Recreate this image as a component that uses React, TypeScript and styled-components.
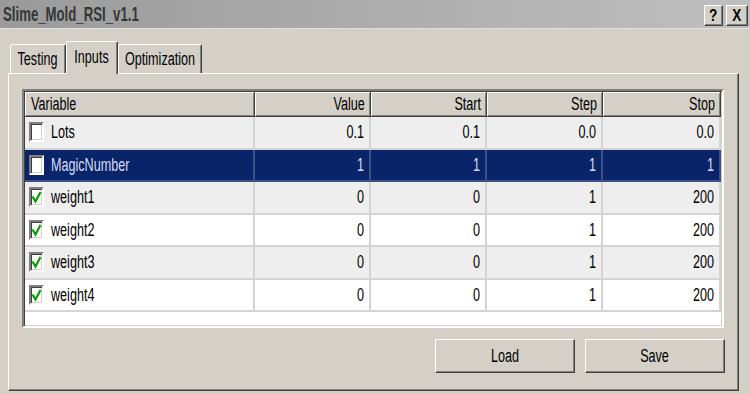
import React from "react";
import styled, { createGlobalStyle } from "styled-components";

const GlobalStyle = createGlobalStyle`
  html, body {
    margin: 0;
    padding: 0;
    background: #d4d0c8;
  }
  body {
    font-family: "Liberation Sans", Arial, sans-serif;
  }
`;

// narrow bitmap-ish UI font: regular face squeezed horizontally
const Label = styled.span<{
  $size?: number;
  $scale?: number;
  $origin?: string;
  $bold?: boolean;
  $color?: string;
}>`
  display: inline-block;
  font-size: ${(p) => p.$size ?? 18}px;
  font-weight: ${(p) => (p.$bold ? 700 : 400)};
  color: ${(p) => p.$color ?? "inherit"};
  transform: scaleX(${(p) => p.$scale ?? 0.7});
  transform-origin: ${(p) => p.$origin ?? "left"} center;
  white-space: nowrap;
  line-height: 1;
`;

const Window = styled.div`
  width: 750px;
  height: 394px;
  background: #d4d0c8;
  display: flex;
  flex-direction: column;
  overflow: hidden;
  color: #000;
`;

const TitleBar = styled.div`
  height: 29px;
  flex: none;
  box-sizing: border-box;
  display: flex;
  align-items: center;
  justify-content: space-between;
  padding: 0 2px 0 3px;
  background: linear-gradient(to right, #9a9a9a, #bfbfbf);
  border-bottom: 1px solid #e2e0da;
`;

const CapButtons = styled.div`
  display: flex;
  gap: 3px;
  margin-top: 2px;
`;

const CapButton = styled.div<{ $w: number }>`
  width: ${(p) => p.$w}px;
  height: 21px;
  box-sizing: border-box;
  background: #d4d0c8;
  border: 1px solid;
  border-color: #fff #404040 #404040 #fff;
  box-shadow: inset -1px -1px #808080;
  display: flex;
  align-items: center;
  justify-content: center;
`;

const Body = styled.div`
  flex: 1;
  display: flex;
  flex-direction: column;
  padding: 12px 11px 3px 8px;
  min-height: 0;
`;

const TabStrip = styled.div`
  height: 32px;
  flex: none;
  display: flex;
  align-items: flex-end;
  padding-left: 2px;
  position: relative;
  z-index: 1;
`;

const Tab = styled.div<{ $w: number; $active?: boolean }>`
  width: ${(p) => p.$w}px;
  height: ${(p) => (p.$active ? 33 : 29)}px;
  margin-bottom: ${(p) => (p.$active ? -1 : 0)}px;
  box-sizing: border-box;
  background: #d4d0c8;
  border: 1px solid;
  border-bottom: none;
  border-color: #fff #404040 transparent #fff;
  border-radius: 2px 2px 0 0;
  box-shadow: inset -1px 0 #808080;
  display: flex;
  align-items: center;
  justify-content: center;
  padding-bottom: ${(p) => (p.$active ? 3 : 0)}px;
`;

const Panel = styled.div`
  flex: 1;
  box-sizing: border-box;
  display: flex;
  flex-direction: column;
  gap: 11px;
  padding: 15px 14px 16px 13px;
  border: 1px solid;
  border-color: #fff #404040 #404040 #fff;
  box-shadow: inset -1px -1px #808080;
`;

const Table = styled.div`
  height: 239px;
  flex: none;
  box-sizing: border-box;
  background: #fff;
  border: 2px solid;
  border-color: #808080 #fff #fff #808080;
  box-shadow: inset 1px 1px #404040, inset -1px -1px #d4d0c8;
  padding: 1px;
  overflow: hidden;
`;

const Row = styled.div<{ $bg: string }>`
  display: grid;
  grid-template-columns: 230px 116px 116px 116px 1fr;
  background: ${(p) => p.$bg};
`;

const HeadCell = styled.div<{ $align: string }>`
  height: 25px;
  box-sizing: border-box;
  display: flex;
  align-items: center;
  justify-content: ${(p) => (p.$align === "left" ? "flex-start" : "flex-end")};
  padding: 0 5px 0 6px;
  background: #d4d0c8;
  border-right: 1px solid #404040;
  border-bottom: 1px solid #404040;
  box-shadow: inset 1px 1px #fff, inset -1px -1px #808080;
`;

const Cell = styled.div<{ $align: string; $line: string }>`
  height: 32.5px;
  box-sizing: border-box;
  display: flex;
  align-items: center;
  justify-content: ${(p) => (p.$align === "left" ? "flex-start" : "flex-end")};
  gap: 7px;
  padding: 0 5px 0 4px;
  border-right: 2px solid ${(p) => p.$line};
  border-bottom: 2px solid ${(p) => p.$line};
`;

const CheckBox = styled.div`
  width: 15px;
  height: 20px;
  flex: none;
  box-sizing: border-box;
  background: #fff;
  border: 2px solid;
  border-color: #808080 #fff #fff #808080;
  box-shadow: inset 1px 1px #404040, inset -1px -1px #d4d0c8;
  display: flex;
  align-items: center;
  justify-content: center;
`;

const ButtonRow = styled.div`
  display: flex;
  justify-content: flex-end;
  gap: 10px;
  margin-right: -1px;
`;

const Button = styled.div`
  width: 140px;
  height: 34px;
  box-sizing: border-box;
  background: #d4d0c8;
  border: 1px solid;
  border-color: #fff #404040 #404040 #fff;
  box-shadow: inset -1px -1px #808080;
  display: flex;
  align-items: center;
  justify-content: center;
`;

const columns = [
  { name: "Variable", align: "left" },
  { name: "Value", align: "right" },
  { name: "Start", align: "right" },
  { name: "Step", align: "right" },
  { name: "Stop", align: "right" },
];

const inputs = [
  { name: "Lots", checked: false, values: ["0.1", "0.1", "0.0", "0.0"] },
  { name: "MagicNumber", checked: false, values: ["1", "1", "1", "1"], selected: true },
  { name: "weight1", checked: true, values: ["0", "0", "1", "200"] },
  { name: "weight2", checked: true, values: ["0", "0", "1", "200"] },
  { name: "weight3", checked: true, values: ["0", "0", "1", "200"] },
  { name: "weight4", checked: true, values: ["0", "0", "1", "200"] },
];

const Check = () => (
  <svg width="11" height="14" viewBox="0 0 11 14">
    <path d="M1.5 6.5 L4.5 11.5 L9.5 2" fill="none" stroke="#00a000" strokeWidth="2.2" />
  </svg>
);

export default function App() {
  return (
    <>
      <GlobalStyle />
      <Window>
        <TitleBar>
          <Label $size={20} $bold $scale={0.66} $color="#363636">
            Slime_Mold_RSI_v1.1
          </Label>
          <CapButtons>
            <CapButton $w={19}>
              <Label $size={17} $bold $scale={0.8} $origin="center">?</Label>
            </CapButton>
            <CapButton $w={22}>
              <Label $size={17} $bold $scale={0.8} $origin="center">X</Label>
            </CapButton>
          </CapButtons>
        </TitleBar>
        <Body>
          <TabStrip>
            <Tab $w={56}>
              <Label $origin="center">Testing</Label>
            </Tab>
            <Tab $w={52} $active>
              <Label $origin="center">Inputs</Label>
            </Tab>
            <Tab $w={84}>
              <Label $origin="center">Optimization</Label>
            </Tab>
          </TabStrip>
          <Panel>
            <Table>
              <Row $bg="#d4d0c8">
                {columns.map((c) => (
                  <HeadCell key={c.name} $align={c.align}>
                    <Label $origin={c.align}>{c.name}</Label>
                  </HeadCell>
                ))}
              </Row>
              {inputs.map((r, i) => {
                const bg = r.selected ? "#0a246a" : i % 2 === 0 ? "#eeeeee" : "#ffffff";
                const line = r.selected ? "#3d5289" : "#d4d4d4";
                const color = r.selected ? "#d6dcf0" : "#000";
                return (
                  <Row key={r.name} $bg={bg}>
                    <Cell $align="left" $line={line}>
                      <CheckBox>{r.checked && <Check />}</CheckBox>
                      <Label $color={color}>{r.name}</Label>
                    </Cell>
                    {r.values.map((v, j) => (
                      <Cell key={j} $align="right" $line={line}>
                        <Label $origin="right" $color={color}>{v}</Label>
                      </Cell>
                    ))}
                  </Row>
                );
              })}
            </Table>
            <ButtonRow>
              <Button>
                <Label $origin="center">Load</Label>
              </Button>
              <Button>
                <Label $origin="center">Save</Label>
              </Button>
            </ButtonRow>
          </Panel>
        </Body>
      </Window>
    </>
  );
}
